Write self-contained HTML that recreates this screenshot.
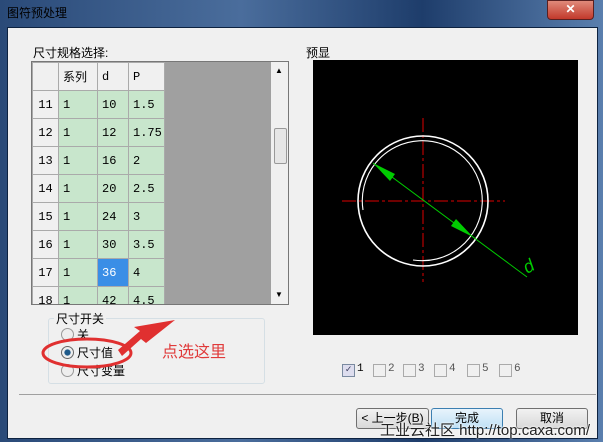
<html><body style="margin:0;width:603px;height:442px;overflow:hidden;font-family:'Liberation Sans','Noto Sans CJK SC',sans-serif;font-size:12px;background:#1c3a66">
<div style="position:absolute;left:0;top:0;width:603px;height:442px;background:linear-gradient(90deg,#2a4a78,#4a6d9c 40%,#1e3d6b 70%,#5a7fae);"></div>
<div style="position:absolute;left:7px;top:4px;color:#000;font-size:12px">图符预处理</div>
<div style="position:absolute;left:547px;top:0;width:45px;height:18px;background:linear-gradient(#e08a7a,#c2392b);border-radius:0 0 4px 4px;border:1px solid #5a2020;color:#fff;text-align:center;font-weight:bold;line-height:17px">✕</div>
<div style="position:absolute;left:7px;top:27px;width:589px;height:410px;background:#f0f0f0;border:1px solid #0d2240"></div>
<div style="position:absolute;left:33px;top:44px">尺寸规格选择:</div>
<div style="position:absolute;left:31px;top:61px;width:256px;height:242px;background:#a0a0a0;border:1px solid #777;overflow:hidden">
 <div style="position:absolute;left:239px;top:0;width:17px;height:242px;background:#f0f0f0"></div>
 <div style="position:absolute;left:242px;top:66px;width:11px;height:34px;background:#e6e6e6;border:1px solid #999;border-radius:2px"></div>
 <div style="position:absolute;left:243px;top:4px;font-size:8px">▲</div>
 <div style="position:absolute;left:243px;top:228px;font-size:8px">▼</div>
 <table style="position:absolute;left:0;top:0;border-collapse:collapse;table-layout:fixed;width:132px;font-family:'Liberation Mono','Noto Sans CJK SC',monospace;font-size:12px">
 <colgroup><col style="width:26px"><col style="width:39px"><col style="width:31px"><col style="width:36px"></colgroup>
 <tr style="height:28px;background:#f0f0f0"><td style="border:1px solid #aaa"></td><td style="border:1px solid #aaa;padding:0 0 0 4px">系列</td><td style="border:1px solid #aaa;padding:0 0 0 4px">d</td><td style="border:1px solid #aaa;padding:0 0 0 4px">P</td></tr>
 <tr style="height:28px"><td style="background:#f0f0f0;border:1px solid #aaa;text-align:center;padding:0">11</td><td style="background:#c8e6cc;border:1px solid #aaa;padding:0 0 0 4px">1</td><td style="background:#c8e6cc;border:1px solid #aaa;padding:0 0 0 4px">10</td><td style="background:#c8e6cc;border:1px solid #aaa;padding:0 0 0 4px">1.5</td></tr>
 <tr style="height:28px"><td style="background:#f0f0f0;border:1px solid #aaa;text-align:center;padding:0">12</td><td style="background:#c8e6cc;border:1px solid #aaa;padding:0 0 0 4px">1</td><td style="background:#c8e6cc;border:1px solid #aaa;padding:0 0 0 4px">12</td><td style="background:#c8e6cc;border:1px solid #aaa;padding:0 0 0 4px">1.75</td></tr>
 <tr style="height:28px"><td style="background:#f0f0f0;border:1px solid #aaa;text-align:center;padding:0">13</td><td style="background:#c8e6cc;border:1px solid #aaa;padding:0 0 0 4px">1</td><td style="background:#c8e6cc;border:1px solid #aaa;padding:0 0 0 4px">16</td><td style="background:#c8e6cc;border:1px solid #aaa;padding:0 0 0 4px">2</td></tr>
 <tr style="height:28px"><td style="background:#f0f0f0;border:1px solid #aaa;text-align:center;padding:0">14</td><td style="background:#c8e6cc;border:1px solid #aaa;padding:0 0 0 4px">1</td><td style="background:#c8e6cc;border:1px solid #aaa;padding:0 0 0 4px">20</td><td style="background:#c8e6cc;border:1px solid #aaa;padding:0 0 0 4px">2.5</td></tr>
 <tr style="height:28px"><td style="background:#f0f0f0;border:1px solid #aaa;text-align:center;padding:0">15</td><td style="background:#c8e6cc;border:1px solid #aaa;padding:0 0 0 4px">1</td><td style="background:#c8e6cc;border:1px solid #aaa;padding:0 0 0 4px">24</td><td style="background:#c8e6cc;border:1px solid #aaa;padding:0 0 0 4px">3</td></tr>
 <tr style="height:28px"><td style="background:#f0f0f0;border:1px solid #aaa;text-align:center;padding:0">16</td><td style="background:#c8e6cc;border:1px solid #aaa;padding:0 0 0 4px">1</td><td style="background:#c8e6cc;border:1px solid #aaa;padding:0 0 0 4px">30</td><td style="background:#c8e6cc;border:1px solid #aaa;padding:0 0 0 4px">3.5</td></tr>
 <tr style="height:28px"><td style="background:#f0f0f0;border:1px solid #aaa;text-align:center;padding:0">17</td><td style="background:#c8e6cc;border:1px solid #aaa;padding:0 0 0 4px">1</td><td style="background:#3a8ee6;color:#fff;border:1px solid #aaa;padding:0 0 0 4px">36</td><td style="background:#c8e6cc;border:1px solid #aaa;padding:0 0 0 4px">4</td></tr>
 <tr style="height:28px"><td style="background:#f0f0f0;border:1px solid #aaa;text-align:center;padding:0">18</td><td style="background:#c8e6cc;border:1px solid #aaa;padding:0 0 0 4px">1</td><td style="background:#c8e6cc;border:1px solid #aaa;padding:0 0 0 4px">42</td><td style="background:#c8e6cc;border:1px solid #aaa;padding:0 0 0 4px">4.5</td></tr>
 </table>
</div>
<div style="position:absolute;left:48px;top:318px;width:215px;height:64px;border:1px solid #d5dfe5;border-radius:3px"></div>
<div style="position:absolute;left:54px;top:310px;background:#f0f0f0;padding:0 2px">尺寸开关</div>
<div style="position:absolute;left:61px;top:328px;width:11px;height:11px;border:1px solid #999;border-radius:50%;background:#eee"></div><div style="position:absolute;left:77px;top:326px">关</div>
<div style="position:absolute;left:61px;top:346px;width:11px;height:11px;border:1px solid #666;border-radius:50%;background:radial-gradient(#1e5a8a 35%,#eee 45%)"></div><div style="position:absolute;left:77px;top:344px">尺寸值</div>
<div style="position:absolute;left:61px;top:364px;width:11px;height:11px;border:1px solid #999;border-radius:50%;background:#eee"></div><div style="position:absolute;left:77px;top:362px">尺寸变量</div>
<svg style="position:absolute;left:0;top:0" width="603" height="442"><ellipse cx="87" cy="353" rx="44" ry="14" fill="none" stroke="#e03030" stroke-width="3"/><polygon points="118,350 140,331 134,327 175,320 146,343 141,339 122,356" fill="#e03030"/><rect x="19" y="394" width="577" height="1" fill="#a0a0a0"/></svg>
<div style="position:absolute;left:162px;top:338px;color:#e03a3a;font-size:16px">点选这里</div>
<div style="position:absolute;left:306px;top:44px">预显</div>
<svg style="position:absolute;left:313px;top:60px" width="265" height="275"><rect width="265" height="275" fill="#000"/>
<g stroke="#d00" stroke-width="1" stroke-dasharray="14,3,3,3"><line x1="29" y1="141" x2="192" y2="141"/><line x1="110" y1="58" x2="110" y2="222"/></g>
<circle cx="110" cy="141" r="65" fill="none" stroke="#fff" stroke-width="1.6"/>
<path d="M50 150 A60 60 0 1 1 100 200" fill="none" stroke="#fff" stroke-width="1.1"/>
<line x1="60" y1="103" x2="214" y2="217" stroke="#0c0" stroke-width="1"/><polygon points="60,103 82,114 77,121" fill="#0c0"/><polygon points="160,177 138,166 143,159" fill="#0c0"/>
<text x="210" y="212" fill="#0c0" font-size="18" font-style="italic" transform="rotate(-30 216 205)">d</text></svg>
<div style="position:absolute;left:0;top:0;font-family:'Liberation Mono',monospace;font-size:11px;color:#555">
<span style="position:absolute;left:342px;top:364px;width:11px;height:11px;border:1px solid #7a8aa0;background:#dde;font-size:10px;line-height:11px;color:#335;text-align:center">✓</span><span style="position:absolute;left:357px;top:363px;color:#000">1</span>
<span style="position:absolute;left:373px;top:364px;width:11px;height:11px;border:1px solid #aaa"></span><span style="position:absolute;left:388px;top:363px">2</span>
<span style="position:absolute;left:403px;top:364px;width:11px;height:11px;border:1px solid #aaa"></span><span style="position:absolute;left:418px;top:363px">3</span>
<span style="position:absolute;left:434px;top:364px;width:11px;height:11px;border:1px solid #aaa"></span><span style="position:absolute;left:449px;top:363px">4</span>
<span style="position:absolute;left:467px;top:364px;width:11px;height:11px;border:1px solid #aaa"></span><span style="position:absolute;left:482px;top:363px">5</span>
<span style="position:absolute;left:499px;top:364px;width:11px;height:11px;border:1px solid #aaa"></span><span style="position:absolute;left:514px;top:363px">6</span></div>
<div style="position:absolute;left:356px;top:408px;width:71px;height:19px;border:1px solid #707070;border-radius:3px;background:linear-gradient(#f2f2f2,#d8d8d8);text-align:center;line-height:19px">&lt; 上一步(B)</div>
<div style="position:absolute;left:431px;top:408px;width:70px;height:19px;border:1px solid #3c7fb1;border-radius:3px;background:linear-gradient(#e8f4fc,#bfe0f5);text-align:center;line-height:19px">完成</div>
<div style="position:absolute;left:516px;top:408px;width:70px;height:19px;border:1px solid #707070;border-radius:3px;background:linear-gradient(#f2f2f2,#d8d8d8);text-align:center;line-height:19px">取消</div>
<div style="position:absolute;left:380px;top:419px;font-size:15px;color:#222;text-shadow:0 0 2px #fff,0 0 2px #fff">工业云社区 http://top.caxa.com/</div>
</body></html>
